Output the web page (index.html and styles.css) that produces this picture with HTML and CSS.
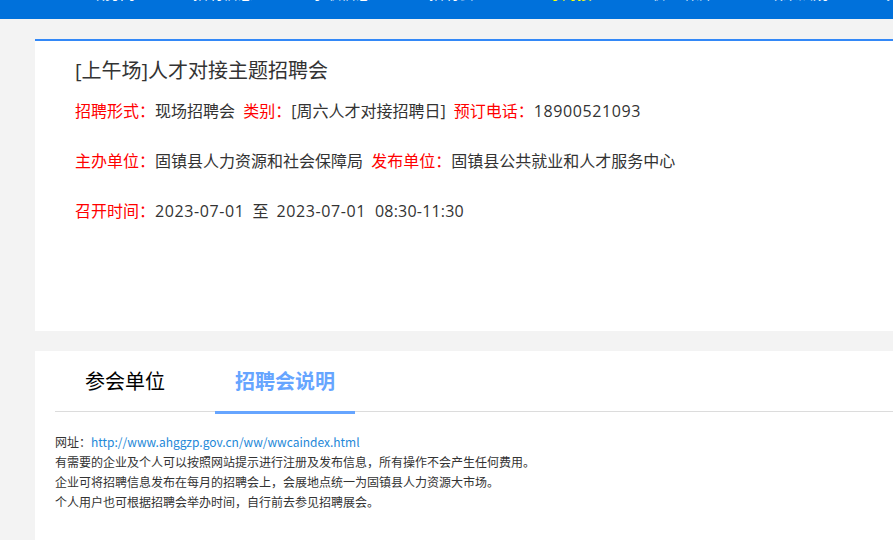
FILE: index.html
```html
<!DOCTYPE html>
<html lang="zh-CN">
<head>
<meta charset="utf-8">
<title>[上午场]人才对接主题招聘会</title>
<link rel="stylesheet" href="styles.css">
</head>
<body>
<div class="nav">
  <div class="nav-row">
    <span class="nav-item">政务网</span>
    <span class="nav-item">招聘信息</span>
    <span class="nav-item">求职信息</span>
    <span class="nav-item">招聘会</span>
    <span class="nav-item active">人才对接</span>
    <span class="nav-item">职业培训</span>
    <span class="nav-item">政策法规</span>
    <span class="nav-item">关于我们</span>
  </div>
</div>
<div class="main">
  <div class="card info-card">
    <h1 class="title">[上午场]人才对接主题招聘会</h1>
    <div class="row">
      <span class="label">招聘形式：</span><span class="val">现场招聘会</span>
      <span class="label gap">类别：</span><span class="val">[周六人才对接招聘日]</span>
      <span class="label gap">预订电话：</span><span class="val num">18900521093</span>
    </div>
    <div class="row">
      <span class="label">主办单位：</span><span class="val">固镇县人力资源和社会保障局</span>
      <span class="label gap">发布单位：</span><span class="val">固镇县公共就业和人才服务中心</span>
    </div>
    <div class="row">
      <span class="label">召开时间：</span><span class="val num">2023-07-01</span><span class="val sep">至</span><span class="val num">2023-07-01</span><span class="val time sep2">08:30-11:30</span>
    </div>
  </div>
  <div class="card tab-card">
    <div class="tabs">
      <div class="tab">参会单位</div>
      <div class="tab active">招聘会说明</div>
    </div>
    <div class="desc">
      <p>网址：<a class="link" href="#">http://www.ahggzp.gov.cn/ww/wwcaindex.html</a></p>
      <p>有需要的企业及个人可以按照网站提示进行注册及发布信息，所有操作不会产生任何费用。</p>
      <p>企业可将招聘信息发布在每月的招聘会上，会展地点统一为固镇县人力资源大市场。</p>
      <p>个人用户也可根据招聘会举办时间，自行前去参见招聘展会。</p>
    </div>
  </div>
</div>
</body>
</html>
```
FILE: styles.css
```css
html, body {
  margin: 0;
  padding: 0;
}
body {
  background: #f3f3f3;
  font-family: "Noto Sans CJK SC", "Noto Sans", sans-serif;
  color: #333;
  overflow: hidden;
}
.nav {
  height: 19px;
  background: #0071db;
  overflow: hidden;
}
.nav-row {
  display: flex;
  gap: 58px;
  padding-left: 90px;
  margin-top: -16px;
  white-space: nowrap;
}
.nav-item {
  font-size: 15px;
  line-height: 18px;
  color: #fff;
}
.nav-item.active {
  color: #ffff00;
}
.main {
  padding: 20px 0 0 35px;
}
.card {
  background: #fff;
}
.info-card {
  border-top: 2px solid #3388f7;
  height: 275px;
  padding: 15px 0 0 40px;
  margin-bottom: 20px;
  font-family: "Open Sans", "Noto Sans CJK SC", sans-serif;
}
.title {
  margin: 0;
  font-size: 20px;
  font-weight: normal;
  line-height: 30px;
  color: #333;
}
.row {
  font-size: 16px;
  line-height: 50px;
  white-space: nowrap;
}
.label {
  color: #ff0000;
}
.label.gap {
  margin-left: 4px;
}
.val {
  color: #333;
}
.num {
  letter-spacing: 0.6px;
}
.time {
  letter-spacing: 0.2px;
}
.sep {
  margin: 0 8px;
}
.sep2 {
  margin-left: 9px;
}
.tab-card {
  height: 200px;
  padding: 0 0 0 20px;
}
.tabs {
  display: flex;
  gap: 20px;
  border-bottom: 1px solid #dcdcdc;
  height: 60px;
}
.tab {
  width: 140px;
  height: 60px;
  line-height: 60px;
  text-align: center;
  font-size: 20px;
  color: #000;
  border-bottom: 3px solid transparent;
}
.tab.active {
  color: #66a5ff;
  font-weight: bold;
  border-bottom-color: #66a5ff;
}
.desc {
  padding-top: 20px;
  font-size: 12px;
  line-height: 20px;
  color: #333;
}
.desc p {
  margin: 0;
}
.link {
  color: #1e88d8;
  text-decoration: none;
}
```
